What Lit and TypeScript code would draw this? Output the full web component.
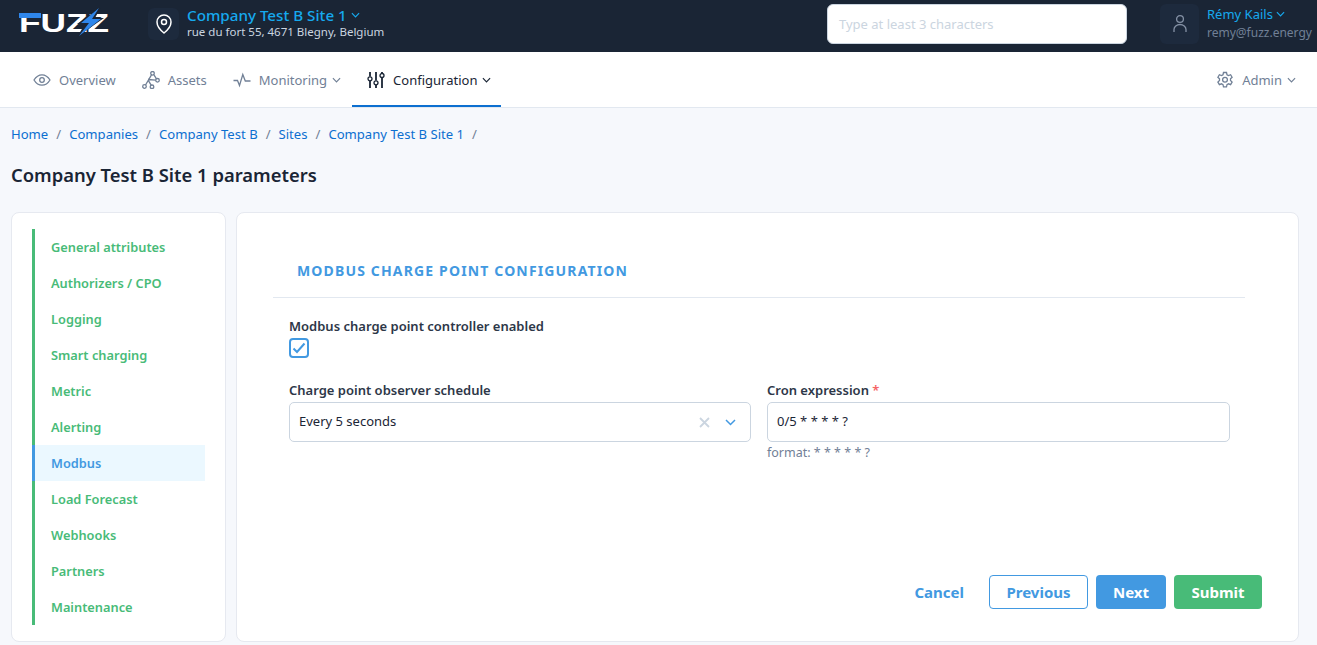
import { LitElement, css, html, svg } from 'lit';
import { customElement } from 'lit/decorators.js';

const chevron = html`<svg class="chev" viewBox="0 0 10 6" fill="none" stroke="currentColor" stroke-width="1.3"><path d="M1 1l4 4 4-4" /></svg>`;

const icons = {
  eye: svg`<path d="M1 9S4.200 3.800 9 3.800 17 9 17 9s-3.200 5.200-8 5.200S1 9 1 9z"/><circle cx="9" cy="9" r="2.300"/>`,
  nodes: svg`<circle cx="10.500" cy="2.300" r="1.800"/><circle cx="15.500" cy="9.300" r="1.800"/><circle cx="2.500" cy="15.500" r="1.800"/><circle cx="10" cy="15.800" r="1.800"/><path d="M9.500 3.900L3.500 14M11.800 3.600l2.700 4.200M6.300 9.300l3 5M6 8.500l7.700.7"/>`,
  pulse: svg`<path d="M0.500 9.500h4l2 5 3.300-11 2.500 6.500h5.200"/>`,
  sliders: svg`<path stroke-width="1.800" d="M3 1v4.500M3 10v7M9 1v8.500M9 14v3M15 1v1M15 7v10"/><circle cx="3" cy="7.800" r="2"/><circle cx="9" cy="11.800" r="2"/><circle cx="15" cy="4.500" r="2"/>`,
  gear: svg`<path d="M7.500 1.500h3l.5 2.200 1.500.8 2.100-.8 1.500 2.600-1.600 1.500v1.700l1.600 1.500-1.500 2.600-2.100-.8-1.500.8-.5 2.200h-3L7 13.600l-1.500-.8-2.100.8-1.500-2.600 1.600-1.500V7.800L1.900 6.300l1.500-2.600 2.100.8L7 3.700z"/><circle cx="9" cy="8.700" r="2.400"/>`,
};

const icon = (name: keyof typeof icons) =>
  html`<svg class="ico" viewBox="0 0 18 18" fill="none" stroke="currentColor" stroke-width="1.300">${icons[name]}</svg>`;

const sections = [
  'General attributes',
  'Authorizers / CPO',
  'Logging',
  'Smart charging',
  'Metric',
  'Alerting',
  'Modbus',
  'Load Forecast',
  'Webhooks',
  'Partners',
  'Maintenance',
];

const crumbs = ['Home', 'Companies', 'Company Test B', 'Sites', 'Company Test B Site 1'];

@customElement('app-root')
export class AppRoot extends LitElement {
  static styles = css`
    :host {
      display: block;
      height: 645px;
      overflow: hidden;
      background: #f6f8fc;
      color: #2d3748;
      font-family: 'Noto Sans', 'Open Sans', sans-serif;
      font-size: 13px;
    }
    * {
      box-sizing: border-box;
    }
    .top {
      height: 52px;
      background: #1a2535;
      display: flex;
      align-items: flex-start;
      padding: 0 6px 0 19px;
    }
    .logo {
      width: 90px;
      height: 30px;
      margin: 8px 39px 0 0;
      flex: none;
    }
    .logo text {
      font-family: 'Liberation Sans', sans-serif;
      font-weight: 700;
      font-size: 26.4px;
      fill: #fff;
    }
    .pin {
      width: 31px;
      height: 32px;
      margin: 8px 8px 0 0;
      background: #1d2a3d;
      border-radius: 6px;
      display: flex;
      align-items: center;
      justify-content: center;
      color: #fff;
    }
    .pin svg {
      width: 18px;
      height: 20px;
    }
    .site {
      display: flex;
      flex-direction: column;
      flex: 1;
      margin-top: 5px;
    }
    .site-name {
      color: #16a9ee;
      font-size: 15.2px;
      font-weight: 500;
      line-height: 20px;
      display: flex;
      align-items: center;
      gap: 4px;
    }
    .site-addr {
      color: #cbd5e0;
      font-size: 11.5px;
      line-height: 14px;
    }
    .search {
      width: 300px;
      height: 40px;
      margin: 4px 33px 0 0;
      background: #fff;
      border: 1px solid #cbd5e0;
      border-radius: 6px;
      padding: 0 11px;
      display: flex;
      align-items: center;
      color: #cbd5e0;
      font-size: 13px;
    }
    .avatar {
      width: 39px;
      height: 40px;
      margin: 4px 8px 0 0;
      background: #1d2a3d;
      border-radius: 6px;
      display: flex;
      align-items: center;
      justify-content: center;
      color: #8491a5;
    }
    .avatar svg {
      width: 14px;
      height: 20px;
    }
    .user {
      width: 104px;
      margin-top: 4px;
    }
    .user-name {
      color: #16a9ee;
      font-size: 13px;
      line-height: 20px;
      display: flex;
      align-items: center;
      gap: 3px;
    }
    .user-mail {
      color: #718096;
      font-size: 12px;
      line-height: 18px;
    }
    .chev {
      width: 9px;
      height: 6px;
      flex: none;
    }
    .nav {
      height: 56px;
      background: #fff;
      border-bottom: 1px solid #e2e8f0;
      display: flex;
      padding: 0 10px 0 18px;
    }
    .tab {
      display: flex;
      align-items: center;
      gap: 8px;
      padding: 0 11px 0 15px;
      color: #718096;
      font-size: 13px;
      height: 55px;
    }
    .tab .chev {
      margin-left: -3px;
    }
    .tab.on {
      color: #1a2535;
      padding-right: 10px;
      box-shadow: inset 0 -2px 0 #0c6fd0;
    }
    .tab.right {
      margin-left: auto;
    }
    .ico {
      width: 18px;
      height: 18px;
      flex: none;
    }
    .crumbs {
      display: flex;
      gap: 8px;
      padding: 16px 11px 0;
      line-height: 20px;
      color: #718096;
      font-size: 13.1px;
    }
    .crumbs a {
      color: #0c6fd0;
    }
    h1 {
      margin: 0;
      padding: 21px 11px 0;
      font-size: 18.400px;
      font-weight: 600;
      line-height: 20px;
      color: #1a2535;
    }
    .cols {
      display: flex;
      gap: 10px;
      padding: 27px 18px 0 11px;
    }
    .card {
      background: #fff;
      border: 1px solid #e6e9f0;
      border-radius: 8px;
      height: 430px;
    }
    .side {
      width: 215px;
      padding: 16px 20px;
      flex: none;
    }
    .side ul {
      list-style: none;
      margin: 0;
      padding: 0;
      border-left: 3px solid #48bb78;
    }
    .side li {
      height: 36px;
      line-height: 36px;
      padding-left: 16px;
      color: #48bb78;
      font-weight: 600;
      font-size: 12.800px;
    }
    .side li.on {
      background: #ebf8ff;
      color: #4299e1;
      box-shadow: -3px 0 0 #4299e1;
    }
    .main {
      flex: 1;
      padding: 46px 36px 32px;
      display: flex;
      flex-direction: column;
    }
    h2 {
      margin: 0 17px 0 0;
      padding: 0 24px 14px;
      color: #4299e1;
      font-size: 14px;
      font-weight: 700;
      line-height: 24px;
      letter-spacing: 1.150px;
      border-bottom: 1px solid #e2e8f0;
    }
    .form {
      padding: 18px 0 0 16px;
    }
    label {
      display: block;
      font-weight: 600;
      font-size: 13px;
      line-height: 20px;
      color: #2d3748;
    }
    .req {
      color: #f56565;
    }
    .check {
      width: 20px;
      height: 20px;
      margin-top: 2px;
      border: 2px solid #4299e1;
      border-radius: 4px;
      display: flex;
      align-items: center;
      justify-content: center;
    }
    .check svg {
      width: 14px;
      height: 12px;
    }
    .row {
      display: grid;
      grid-template-columns: 462px 463px;
      gap: 16px;
      margin-top: 22px;
    }
    .field {
      height: 40px;
      margin-top: 2px;
      border: 1px solid #cbd5e0;
      border-radius: 5px;
      display: flex;
      align-items: center;
      padding: 0 9px 2px;
      color: #1a2535;
      font-size: 13px;
    }
    .field .val {
      flex: 1;
    }
    .x {
      width: 11px;
      height: 11px;
      margin: 2px 15px 0 0;
      color: #cbd5e0;
    }
    .down {
      width: 11px;
      height: 7px;
      margin: 2px 5px 0 0;
      color: #4299e1;
    }
    .hint {
      font-size: 12.500px;
      line-height: 22px;
      color: #718096;
    }
    .actions {
      margin-top: auto;
      display: flex;
      justify-content: flex-end;
      align-items: center;
      gap: 8px;
    }
    .btn {
      height: 34px;
      border-radius: 4px;
      display: flex;
      align-items: center;
      justify-content: center;
      font-weight: 700;
      font-size: 15px;
      color: #fff;
    }
    .cancel {
      color: #4299e1;
      margin-right: 17px;
    }
    .prev {
      width: 99px;
      background: #fff;
      border: 1px solid #4299e1;
      color: #4299e1;
    }
    .next {
      width: 70px;
      background: #4299e1;
    }
    .submit {
      width: 88px;
      background: #48bb78;
    }
  `;

  render() {
    return html`
      <header class="top">
        <svg class="logo" viewBox="0 0 90 30">
          <text x="0" y="24" textLength="90" lengthAdjust="spacingAndGlyphs">FUZZ</text>
          <rect x="0" y="5" width="22" height="5" fill="#2f86ea" />
          <path d="M82 -1L58 16h8l-8 13 27-19h-9z" fill="#1a2535" />
          <path d="M80 0L62 15h8L60 28l22-17h-9z" fill="#2f86ea" />
        </svg>
        <div class="pin">
          <svg viewBox="0 0 18 20" fill="none" stroke="currentColor" stroke-width="1.500">
            <path d="M9 19S2 13.500 2 8a7 7 0 0114 0c0 5.500-7 11-7 11z" />
            <circle cx="9" cy="8" r="2.500" />
          </svg>
        </div>
        <div class="site">
          <div class="site-name">Company Test B Site 1 ${chevron}</div>
          <div class="site-addr">rue du fort 55, 4671 Blegny, Belgium</div>
        </div>
        <div class="search">Type at least 3 characters</div>
        <div class="avatar">
          <svg viewBox="0 0 14 20" fill="none" stroke="currentColor" stroke-width="1.300">
            <circle cx="7" cy="5" r="3.400" />
            <path d="M1 18v-2.500a6 5 0 0112 0V18" />
          </svg>
        </div>
        <div class="user">
          <div class="user-name">Rémy Kails ${chevron}</div>
          <div class="user-mail">remy@fuzz.energy</div>
        </div>
      </header>
      <nav class="nav">
        <div class="tab">${icon('eye')}Overview</div>
        <div class="tab">${icon('nodes')}Assets</div>
        <div class="tab">${icon('pulse')}Monitoring ${chevron}</div>
        <div class="tab on">${icon('sliders')}Configuration ${chevron}</div>
        <div class="tab right">${icon('gear')}Admin ${chevron}</div>
      </nav>
      <div class="crumbs">
        ${crumbs.map((c) => html`<a>${c}</a><span>/</span>`)}
      </div>
      <h1>Company Test B Site 1 parameters</h1>
      <div class="cols">
        <aside class="card side">
          <ul>
            ${sections.map((s) => html`<li class=${s === 'Modbus' ? 'on' : ''}>${s}</li>`)}
          </ul>
        </aside>
        <section class="card main">
          <h2>MODBUS CHARGE POINT CONFIGURATION</h2>
          <div class="form">
            <label>Modbus charge point controller enabled</label>
            <div class="check">
              <svg viewBox="0 0 14 12" fill="none" stroke="#4299e1" stroke-width="2"><path d="M1.500 6.500l3.500 3.500 7.500-8.500" /></svg>
            </div>
            <div class="row">
              <div>
                <label>Charge point observer schedule</label>
                <div class="field">
                  <span class="val">Every 5 seconds</span>
                  <svg class="x" viewBox="0 0 11 11" fill="none" stroke="currentColor" stroke-width="1.800"><path d="M1 1l9 9M10 1l-9 9" /></svg>
                  <svg class="down" viewBox="0 0 11 7" fill="none" stroke="currentColor" stroke-width="1.500"><path d="M1 1l4.500 4.500L10 1" /></svg>
                </div>
              </div>
              <div>
                <label>Cron expression <span class="req">*</span></label>
                <div class="field"><span class="val">0/5 * * * * ?</span></div>
                <div class="hint">format: * * * * * ?</div>
              </div>
            </div>
          </div>
          <div class="actions">
            <span class="btn cancel">Cancel</span>
            <span class="btn prev">Previous</span>
            <span class="btn next">Next</span>
            <span class="btn submit">Submit</span>
          </div>
        </section>
      </div>
    `;
  }
}
